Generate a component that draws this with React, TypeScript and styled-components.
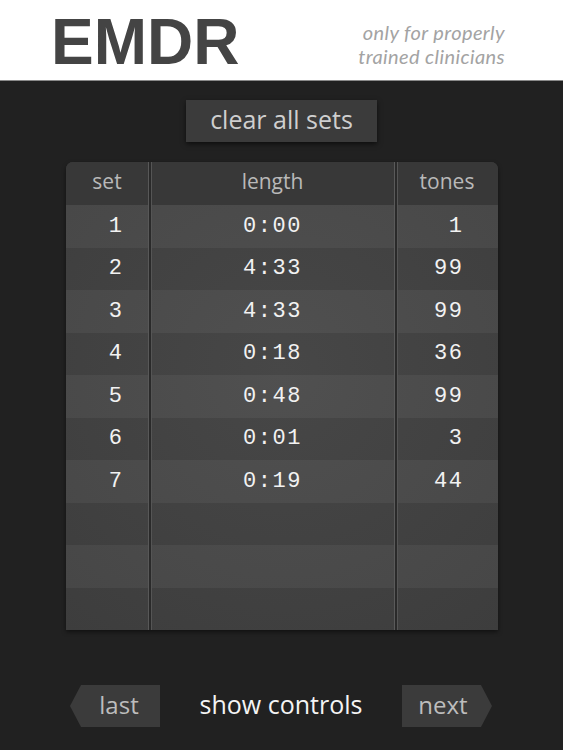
import styled, { createGlobalStyle } from 'styled-components';

const sets = [
  { set: '1', length: '0:00', tones: '1' },
  { set: '2', length: '4:33', tones: '99' },
  { set: '3', length: '4:33', tones: '99' },
  { set: '4', length: '0:18', tones: '36' },
  { set: '5', length: '0:48', tones: '99' },
  { set: '6', length: '0:01', tones: '3' },
  { set: '7', length: '0:19', tones: '44' },
];

const TOTAL_ROWS = 10;

export default function App() {
  const rows = Array.from({ length: TOTAL_ROWS }, (_, i) => sets[i] ?? null);

  return (
    <Page>
      <GlobalStyle />
      <Header>
        <Logo>EMDR</Logo>
        <Tagline>
          <TaglineLine>only for properly</TaglineLine>
          <TaglineLine>trained clinicians</TaglineLine>
        </Tagline>
      </Header>

      <Main>
        <ClearButton type="button">clear all sets</ClearButton>

        <Table>
          <HeadRow>
            <HeadCell $col="set">set</HeadCell>
            <HeadCell $col="length">length</HeadCell>
            <HeadCell $col="tones">tones</HeadCell>
          </HeadRow>
          {rows.map((row, i) => (
            <Row key={i} $odd={i % 2 === 0}>
              <Cell $col="set">{row?.set}</Cell>
              <Cell $col="length">{row?.length}</Cell>
              <Cell $col="tones">{row?.tones}</Cell>
            </Row>
          ))}
        </Table>
      </Main>

      <Footer>
        <NavButton type="button" $dir="left">last</NavButton>
        <ShowControls>show controls</ShowControls>
        <NavButton type="button" $dir="right">next</NavButton>
      </Footer>
    </Page>
  );
}

const GlobalStyle = createGlobalStyle`
  html, body {
    margin: 0;
    padding: 0;
    background: #212121;
  }
  * {
    box-sizing: border-box;
  }
`;

const Page = styled.div`
  width: 563px;
  height: 750px;
  display: flex;
  flex-direction: column;
  background: #212121;
  font-family: "Open Sans", "DejaVu Sans", sans-serif;
  overflow: hidden;
`;

const Header = styled.header`
  height: 81px;
  flex-shrink: 0;
  display: flex;
  align-items: center;
  justify-content: space-between;
  padding: 0 58px 0 51px;
  background: #fff;
  border-bottom: 1px solid #8a8a8a;
`;

const Logo = styled.h1`
  margin: 0;
  padding-top: 3px;
  font-family: "Liberation Sans", Arial, sans-serif;
  font-size: 64px;
  font-weight: 700;
  color: #444;
  line-height: 1;
`;

const Tagline = styled.div`
  display: flex;
  flex-direction: column;
  align-items: flex-end;
  margin-top: 8px;
`;

const TaglineLine = styled.span`
  font-family: Lato, "Open Sans", sans-serif;
  font-size: 20px;
  font-style: italic;
  letter-spacing: 0.4px;
  line-height: 24px;
  color: #a3a3a3;
  white-space: nowrap;
`;

const Main = styled.main`
  display: flex;
  flex-direction: column;
  align-items: center;
  padding-top: 19px;
`;

const ClearButton = styled.button`
  width: 191px;
  height: 42px;
  border: none;
  background: #3b3b3b;
  color: #cfcfcf;
  font-family: inherit;
  font-size: 25px;
  padding: 0 0 4px;
  box-shadow: 0 2px 5px rgba(0, 0, 0, 0.6);
`;

const Table = styled.div`
  width: 432px;
  margin-top: 20px;
  border-radius: 7px 7px 0 0;
  overflow: hidden;
  background: radial-gradient(circle at 50% 45%, #474747, #3d3d3d);
  box-shadow: 0 2px 4px rgba(0, 0, 0, 0.5);
`;

const columns = `85px 246px 1fr`;

const HeadRow = styled.div`
  display: grid;
  grid-template-columns: ${columns};
  height: 43px;
  background: #383838;
`;

const Row = styled.div<{ $odd: boolean }>`
  display: grid;
  grid-template-columns: ${columns};
  height: 42.5px;
  background: ${(p) => (p.$odd ? 'rgba(255,255,255,0.05)' : 'rgba(255,255,255,0.0)')};
`;

type Col = 'set' | 'length' | 'tones';

const cellEdges = (col: Col) => {
  if (col === 'set') return 'border-right: 2px solid #2a2a2a; box-shadow: inset -1px 0 0 #585858;';
  if (col === 'length') return 'border-right: 2px solid #2a2a2a; box-shadow: inset 1px 0 0 #555, inset -1px 0 0 #5a5a5a;';
  return 'box-shadow: inset 1px 0 0 #555;';
};

const HeadCell = styled.div<{ $col: Col }>`
  display: flex;
  align-items: center;
  justify-content: center;
  font-size: 21px;
  color: #b9b9b9;
  padding-bottom: 5px;
  ${(p) => cellEdges(p.$col)}
`;

const Cell = styled.div<{ $col: Col }>`
  display: flex;
  align-items: center;
  justify-content: ${(p) => (p.$col === 'length' ? 'center' : 'flex-end')};
  padding-right: ${(p) => (p.$col === 'set' ? '25px' : p.$col === 'tones' ? '34px' : '0')};
  font-family: "Liberation Mono", "DejaVu Sans Mono", monospace;
  font-size: 22px;
  letter-spacing: 1.5px;
  color: #f2f2f2;
  ${(p) => cellEdges(p.$col)}
`;

const Footer = styled.footer`
  margin-top: auto;
  height: 65px;
  display: flex;
  align-items: flex-start;
  justify-content: space-between;
  padding: 0 71px 0 70px;
`;

const NavButton = styled.button<{ $dir: 'left' | 'right' }>`
  width: 90px;
  height: 42px;
  border: none;
  background: #3b3b3b;
  color: #bdbdbd;
  font-family: inherit;
  font-size: 24px;
  padding: ${(p) => (p.$dir === 'left' ? '0 0 4px 8px' : '0 8px 4px 0')};
  clip-path: ${(p) =>
    p.$dir === 'left'
      ? 'polygon(11px 0, 100% 0, 100% 100%, 11px 100%, 0 50%)'
      : 'polygon(0 0, calc(100% - 11px) 0, 100% 50%, calc(100% - 11px) 100%, 0 100%)'};
`;

const ShowControls = styled.div`
  height: 42px;
  display: flex;
  align-items: center;
  padding-bottom: 4px;
  font-size: 25px;
  color: #f4f4f4;
`;
